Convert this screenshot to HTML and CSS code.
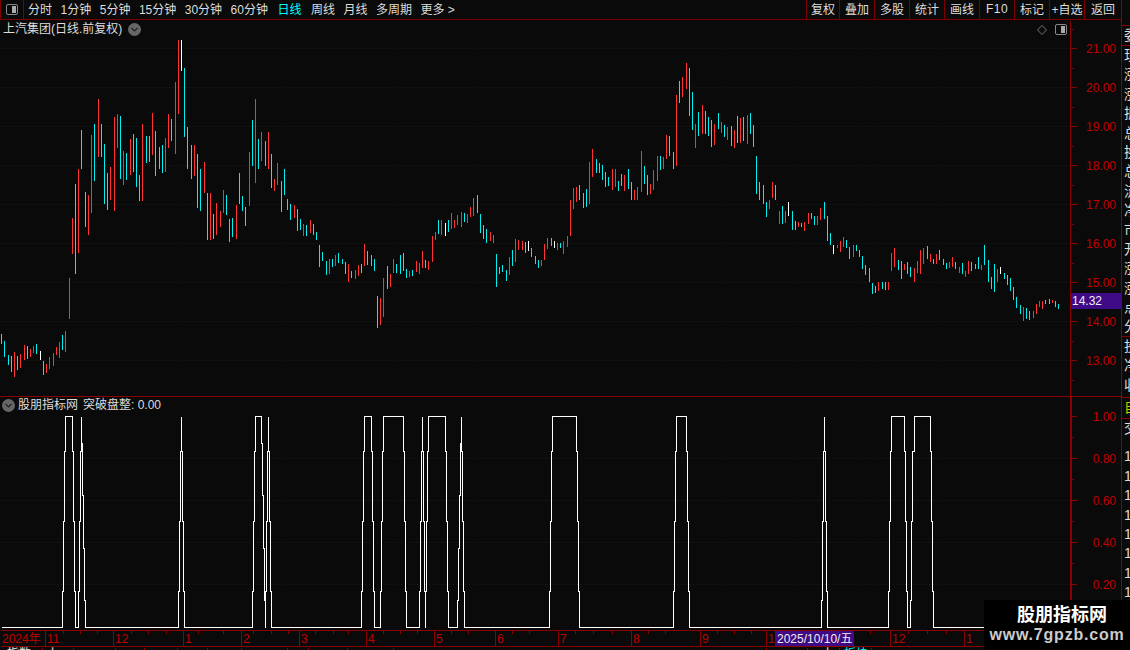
FILE: index.html
```html
<!DOCTYPE html>
<html lang="zh-CN">
<head>
    <meta charset="UTF-8">
    <title>上汽集团 日线</title>
    <link rel="stylesheet" href="styles.css">
</head>
<body>
<div class="app">
    <div class="left">
        <div class="toolbar">
            <div class="cell-icon">
                <span class="split-icon"><i></i></span>
            </div>
            <div class="periods">
                <span>分时</span>
                <span>1分钟</span>
                <span>5分钟</span>
                <span>15分钟</span>
                <span>30分钟</span>
                <span>60分钟</span>
                <span class="on">日线</span>
                <span>周线</span>
                <span>月线</span>
                <span>多周期</span>
                <span>更多 &gt;</span>
            </div>
            <div class="tools">
                <span>复权</span>
                <span>叠加</span>
                <span>多股</span>
                <span>统计</span>
                <span>画线</span>
                <span class="f10">F10</span>
                <span>标记</span>
                <span>+自选</span>
                <span class="back">返回</span>
            </div>
        </div>

        <div class="panel price">
            <div class="panel-title">
                <span>上汽集团(日线.前复权)</span>
                <svg class="down-icon" width="13" height="13" viewBox="0 0 13 13"><circle cx="6.5" cy="6.5" r="6.5" fill="#666"/><path d="M3.5 5L6.5 8L9.5 5" fill="none" stroke="#222" stroke-width="1.2"/></svg>
            </div>
            <div class="panel-tools">
                <svg width="10" height="10" viewBox="0 0 10 10"><path d="M5 .5L9.5 5L5 9.5L.5 5Z" fill="none" stroke="#777"/></svg>
                <span class="split-icon"><i></i></span>
            </div>
            <svg class="plot" width="1070" height="376" viewBox="0 20 1070 376">
                <path class="grid" d="M1 48.5H1070M1 87.5H1070M1 126.5H1070M1 165.5H1070M1 204.5H1070M1 243.5H1070M1 282.5H1070M1 321.5H1070M1 360.5H1070"/>
                <g transform="translate(.5 0)">
                    <path class="bar-up" d="M14 352V377M20 354V368M24 345V360M30 349V357M33 346V353M46 364V373M49 357V369M53 353V366M56 347V355M59 342V358M65 331V352M69 278V319M72 218V254M78 169V253M88 195V235M91 135V213M98 99V157M110 167V200M114 117V211M117 114V148M123 151V185M130 139V175M142 124V201M152 113V155M165 138V172M168 114V148M175 82V154M178 40V114M194 145V176M204 162V193M210 193V240M216 203V235M220 211V227M223 190V213M236 205V239M249 152V206M255 99V183M261 132V161M268 132V169M274 179V191M277 163V185M294 205V218M303 224V236M310 220V233M329 259V274M335 255V266M348 264V282M355 270V279M358 265V276M364 244V266M380 298V325M383 278V317M390 274V287M393 259V273M409 271V277M416 261V272M419 263V274M422 251V268M428 261V270M432 236V262M435 232V240M441 220V235M451 213V229M454 220V228M457 215V225M461 212V227M467 214V223M470 207V217M473 198V216M490 232V241M493 235V243M509 257V275M515 239V262M518 240V250M522 241V250M541 260V266M544 244V260M547 238V249M557 243V250M563 241V254M567 236V247M570 200V236M573 188V209M576 187V202M589 162V204M592 149V177M612 169V190M615 169V187M624 175V191M634 190V200M637 187V200M641 151V192M650 184V194M653 170V190M657 156V181M663 157V169M666 135V159M676 95V166M682 77V97M686 63V89M695 124V148M702 105V134M714 124V145M721 122V133M727 127V140M734 130V148M740 118V143M747 115V144M769 200V209M772 182V198M779 211V224M785 211V223M798 222V227M804 222V231M808 213V224M817 216V225M820 208V220M837 245V248M840 241V252M843 237V247M853 245V257M878 282V291M888 282V290M891 253V271M894 248V267M904 264V270M914 268V282M917 261V273M920 250V274M923 248V264M930 254V262M936 254V264M949 262V268M952 257V267M959 267V273M965 271V277M968 261V274M981 265V270M997 269V282M1023 307V321M1033 311V318M1036 304V314M1039 301V307M1042 301V309M1052 300V303"/>
                    <path class="bar-down" d="M1 334V344M4 341V357M8 355V365M11 356V372M17 356V370M27 346V359M36 344V354M43 361V375M62 335V350M75 184V274M81 130V169M85 192V227M94 124V181M101 124V157M104 144V204M107 173V210M120 116V179M126 153V180M133 134V172M136 138V187M139 175V201M146 136V163M149 136V162M155 131V176M159 147V169M162 145V173M171 119V141M184 68V137M187 127V169M191 145V179M197 154V208M200 169V211M207 193V240M213 214V239M226 195V215M229 219V242M232 218V237M239 173V204M242 196V211M245 207V226M252 120V166M258 139V169M265 141V166M271 154V188M281 181V212M284 169V195M287 199V210M290 204V220M297 209V231M300 219V230M306 225V236M313 224V235M316 232V240M319 245V267M322 252V261M326 261V275M332 259V267M338 253V263M342 259V264M345 262V274M351 271V278M361 264V273M367 251V265M371 255V266M374 259V271M377 296V328M387 266V289M396 264V273M400 255V274M403 253V271M406 269V278M412 270V276M425 260V268M438 220V234M448 220V232M464 213V222M477 195V213M480 214V233M483 225V239M486 229V243M496 254V287M499 267V274M502 265V272M506 270V281M512 250V266M525 242V253M531 248V257M535 256V264M538 260V268M551 238V246M560 243V248M579 185V200M583 193V208M586 189V207M596 159V173M599 163V173M602 165V180M605 172V187M608 177V186M618 181V191M621 174V186M628 169V189M631 182V200M644 166V184M647 175V195M660 156V170M669 136V156M673 152V169M679 81V103M689 68V116M692 92V130M698 112V136M705 111V134M708 117V136M711 120V147M718 113V129M724 125V137M731 126V146M737 116V143M743 117V141M750 113V134M753 125V147M756 156V194M759 182V200M763 185V204M766 202V217M775 185V200M782 206V224M792 211V230M795 221V230M801 223V227M811 213V219M814 216V225M824 202V219M827 216V241M830 233V245M846 240V248M849 247V259M856 245V251M859 250V257M862 256V269M865 265V275M869 268V282M872 283V294M875 286V293M882 282V289M885 282V290M898 260V270M901 261V279M907 262V274M910 267V277M927 246V259M933 259V264M939 250V260M943 259V265M946 263V269M955 262V269M962 263V274M971 262V271M975 264V269M978 257V269M984 245V265M988 260V282M991 277V289M994 264V292M1004 273V279M1007 275V285M1010 278V291M1013 287V300M1016 297V308M1020 305V314M1026 308V319M1029 311V320M1045 300V304M1049 299V304M1055 301V307M1058 304V309"/>
                    <path class="bar-flat" d="M40 351V360M181 40V71M445 223V236M528 241V251M554 241V248M788 202V216M833 245V254M1000 267V274"/>
                </g>
            </svg>
            <svg class="axis" width="51" height="376" viewBox="1070 20 51 376">
                <g transform="translate(.5 .5)">
                    <path class="axis-line" d="M1070 20V396M1071 48H1076M1071 87H1076M1071 126H1076M1071 165H1076M1071 204H1076M1071 243H1076M1071 282H1076M1071 321H1076M1071 360H1076M1071 29H1073M1071 68H1073M1071 107H1073M1071 146H1073M1071 185H1073M1071 224H1073M1071 263H1073M1071 302H1073M1071 341H1073M1071 380H1073"/>
                </g>
                <text class="axis-num" x="1116" y="53">21.00</text>
                <text class="axis-num" x="1116" y="92">20.00</text>
                <text class="axis-num" x="1116" y="131">19.00</text>
                <text class="axis-num" x="1116" y="170">18.00</text>
                <text class="axis-num" x="1116" y="209">17.00</text>
                <text class="axis-num" x="1116" y="248">16.00</text>
                <text class="axis-num" x="1116" y="287">15.00</text>
                <text class="axis-num" x="1116" y="326">14.00</text>
                <text class="axis-num" x="1116" y="365">13.00</text>
                <rect class="last-box" x="1071" y="293" width="50" height="16"/>
                <text class="last-num" x="1072" y="305">14.32</text>
            </svg>
        </div>

        <div class="panel signal">
            <div class="panel-title sub">
                <svg class="down-icon" width="13" height="13" viewBox="0 0 13 13"><circle cx="6.5" cy="6.5" r="6.5" fill="#666"/><path d="M3.5 5L6.5 8L9.5 5" fill="none" stroke="#222" stroke-width="1.2"/></svg>
                <span>股朋指标网</span>
                <span>突破盘整: 0.00</span>
            </div>
            <svg class="plot" width="1070" height="233" viewBox="0 397 1070 233">
                <path class="grid" d="M1 458.5H1070M1 500.5H1070M1 542.5H1070M1 584.5H1070"/>
                <path class="signal-line" transform="translate(.5 .5)" d="M1 627H62V591H63V521H64V451H65V416H72V451H73V521H74V591H75V627H78V591H79V521H80V451H81V416V443H82V495H83V548H84V600H85V627H178V591H179V521H180V451H181V416V451H182V521H183V591H184V627H252V591H253V521H254V451H255V416H261V443H262V495H263V548H264V600H265V627V591H266V521H267V451H268V416V451H269V521H270V591H271V627H361V591H362V521H363V451H364V416H371V451H372V521H373V591H374V627H380V591H381V521H382V451H383V416H403V451H404V521H405V591H406V627H419V591H420V521H421V451H422V416V451H423V521H424V591H425V627V591H426V521H427V451H428V416H445V451H446V521H447V591H448V627H457V600H458V548H459V495H460V443H461V416V451H462V521H463V591H464V627H549V591H550V521H551V451H552V416H576V451H577V521H578V591H579V627H673V591H674V521H675V451H676V416H686V451H687V521H688V591H689V627H821V600H822V521H823V451H824V416V451H825V521H826V591H827V627H888V591H889V521H890V451H891V416H904V451H905V521H906V591H907V627H910V600H911V521H912V451H914V416H930V451H931V521H932V591H933V627H1066"/>
            </svg>
            <svg class="axis" width="51" height="233" viewBox="1070 397 51 233">
                <path class="axis-line thick" d="M1071 397V630"/>
                <g transform="translate(.5 .5)">
                    <path class="axis-line" d="M1071 416H1076M1071 458H1076M1071 500H1076M1071 542H1076M1071 584H1076M1071 437H1073M1071 479H1073M1071 521H1073M1071 563H1073M1071 605H1073"/>
                </g>
                <text class="axis-num" x="1116" y="421">1.00</text>
                <text class="axis-num" x="1116" y="463">0.80</text>
                <text class="axis-num" x="1116" y="505">0.60</text>
                <text class="axis-num" x="1116" y="547">0.40</text>
                <text class="axis-num" x="1116" y="589">0.20</text>
            </svg>
        </div>

        <svg class="dates" width="1121" height="20" viewBox="0 630 1121 20">
            <g transform="translate(.5 .5)">
                <path class="axis-line" d="M0 630H1121M0 646H1121M45 630V646M113 630V646M183 630V646M241 630V646M299 630V646M366 630V646M434 630V646M495 630V646M558 630V646M631 630V646M700 630V646M766 630V646M890 630V646M964 630V646"/>
                <path class="axis-line" d="M63 630V633M80 630V633M97 630V633M131 630V633M148 630V633M166 630V633M198 630V633M223 630V633M253 630V633M271 630V633M288 630V633M315 630V633M333 630V633M348 630V633M383 630V633M400 630V633M417 630V633M451 630V633M468 630V633M512 630V633M529 630V633M575 630V633M593 630V633M612 630V633M648 630V633M665 630V633M717 630V633M734 630V633M751 630V633M870 630V633M908 630V633M927 630V633M946 630V633"/>
                <path class="axis-line" d="M42 647V650M73 647V650M115 647V650M144 647V650M177 647V650M207 647V650M241 647V650M287 647V650M308 647V650M347 647V650M393 647V650M766 647V650M807 647V650M839 647V650M871 647V650"/>
            </g>
            <text class="date-num" x="2" y="643">2024年</text>
            <text class="date-num" x="47" y="643">11</text>
            <text class="date-num" x="115" y="643">12</text>
            <text class="date-num" x="185" y="643">1</text>
            <text class="date-num" x="243" y="643">2</text>
            <text class="date-num" x="301" y="643">3</text>
            <text class="date-num" x="368" y="643">4</text>
            <text class="date-num" x="436" y="643">5</text>
            <text class="date-num" x="497" y="643">6</text>
            <text class="date-num" x="560" y="643">7</text>
            <text class="date-num" x="633" y="643">8</text>
            <text class="date-num" x="702" y="643">9</text>
            <text class="date-num" x="768" y="643">1</text>
            <text class="date-num" x="892" y="643">12</text>
            <text class="date-num" x="966" y="643">1</text>
            <rect class="last-box" x="775" y="631" width="79" height="15"/>
            <text class="last-num" x="777" y="643">2025/10/10/五</text>
            <text class="status-text" x="7" y="658">指数</text>
            <text class="status-text" x="47" y="658">上</text>
            <text class="status-text" x="822" y="658">上</text>
            <text class="status-text cyan" x="844" y="658">板块</text>
        </svg>
    </div>

    <div class="side">
        <div class="side-group one"><span>委</span></div>
        <div class="side-group many">
            <span>现</span><span>涨</span><span>涨</span><span>振</span><span>总</span><span>换</span><span>总</span><span>流</span><span>净</span><span>市</span>
            <span>开</span><span>涨</span><span>涨</span><span>点</span><span>分</span>
        </div>
        <div class="side-group three">
            <span>投</span><span>净</span><span>收</span>
        </div>
        <div class="side-group one yellow"><span>自</span></div>
        <div class="side-group">
            <span>交</span><span class="gap">1</span><span>1</span><span>1</span><span>1</span><span>1</span><span>1</span><span>1</span><span>1</span>
        </div>
    </div>
</div>

<div class="watermark">
    <div class="wm-name">股朋指标网</div>
    <div class="wm-url">www.7gpzb.com</div>
</div>
</body>
</html>
```

FILE: styles.css
```css
* { margin: 0; padding: 0; box-sizing: border-box; }
html, body { width: 1130px; height: 650px; overflow: hidden; }
body {
    position: relative;
    background-color: #0a0a0a;
    color: #ddd;
    font-family: "Liberation Sans", "Noto Sans CJK SC", sans-serif;
    font-size: 12px;
}
i, em { font-style: normal; }
svg { display: block; }

.app { display: flex; height: 650px; }
.left { display: flex; flex-direction: column; width: 1121px; }

/* top bar */
.toolbar {
    display: flex;
    align-items: stretch;
    height: 20px;
    border-bottom: 1px solid #7d0000;
}
.cell-icon {
    display: flex;
    align-items: center;
    justify-content: center;
    width: 24px;
    border-left: 1px solid #7d0000;
    border-right: 1px solid #7d0000;
}
.split-icon {
    display: flex;
    justify-content: flex-end;
    width: 12px; height: 11px;
    padding: 1px 1px 1px 5px;
    border: 1px solid #888;
    border-radius: 2px;
}
.split-icon i { width: 5px; background-color: #aaa; }
.periods {
    display: flex;
    align-items: center;
    gap: 8.5px;
    padding: 0 0 2px 4px;
    flex: 1;
    white-space: nowrap;
}
.periods .on { margin: 0 1px; color: #0ff; }
.tools { display: flex; }
.tools span {
    display: flex;
    align-items: center;
    justify-content: center;
    width: 35px;
    padding-bottom: 2px;
    border-left: 1px solid #7d0000;
    white-space: nowrap;
}
.tools span:first-child { width: 33px; }
.tools .f10 { letter-spacing: .5px; }
.tools .back { width: 37px; }

/* chart panels */
.panel { position: relative; display: flex; }
.panel.price { height: 377px; border-bottom: 1px solid #8b0000; }
.panel.signal { height: 233px; }
.panel-title {
    position: absolute;
    top: 1px; left: 3px;
    display: flex;
    align-items: center;
    gap: 5px;
    height: 17px;
    line-height: 17px;
    white-space: nowrap;
}
.panel-title .down-icon { margin-left: 1px; }
.panel-title.sub { top: 0; left: 0; gap: 3px; }
.panel-title.sub .down-icon { margin-left: 2px; }
.panel-title.sub span:last-child { margin-left: 2px; }
.panel-tools {
    position: absolute;
    top: 4px; left: 1037px;
    display: flex;
    align-items: center;
    gap: 8px;
}

.grid { fill: none; stroke: #6b0000; stroke-dasharray: 1 3; }
.bar-up, .bar-down, .bar-flat, .signal-line, .axis-line { fill: none; shape-rendering: crispEdges; }
.bar-up { stroke: #ff3232; }
.bar-down { stroke: #00f0f0; }
.bar-flat { stroke: #fff; }
.signal-line { stroke: #fff; }
.axis-line { stroke: #8b0000; }
.axis-line.thick { stroke-width: 2; }

.axis-num {
    fill: #c00000;
    font-size: 12px;
    text-anchor: end;
}
.date-num { fill: #c00000; font-size: 12px; }
.last-box { fill: #3f0a85; }
.last-num { fill: #eee; font-size: 12px; }
.status-text { fill: #eee; font-size: 12px; }
.status-text.cyan { fill: #0ff; }

/* cut off column on the right */
.side {
    flex: 1;
    padding-top: 25px;
    overflow: hidden;
    border-left: 1px solid #8b0000;
}
.side-group {
    display: flex;
    flex-direction: column;
    border-top: 1px solid #8b0000;
    padding-left: 2px;
    font-size: 14px;
    line-height: 19.4px;
    white-space: nowrap;
}
.side-group span { height: 19.4px; }
.side-group.one { height: 20px; }
.side-group.many { height: 291px; }
.side-group.three { height: 61px; }
.side-group.yellow { height: 21px; color: #c8c800; }
.side-group .gap { margin-top: 9px; }

.watermark {
    position: absolute;
    right: 0; bottom: 0;
    width: 146px; height: 50px;
    padding-top: 4px;
    background-color: #000;
    color: #fff;
    text-align: center;
}
.wm-name { margin-left: 10px; font-size: 18px; line-height: 22px; font-weight: bold; }
.wm-url { font-size: 16px; line-height: 18px; font-weight: bold; letter-spacing: .8px; color: #ccc; }
```
